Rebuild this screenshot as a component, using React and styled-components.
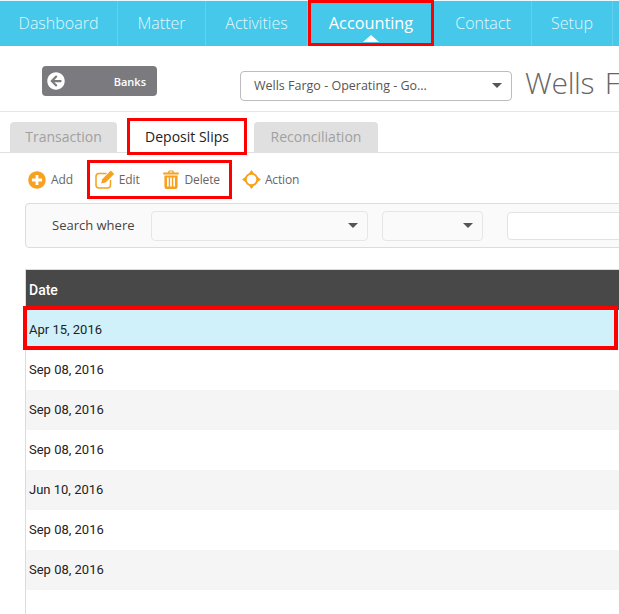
import React from "react";
import styled, { createGlobalStyle } from "styled-components";
import { FaArrowCircleLeft, FaPlusCircle } from "react-icons/fa";

const Global = createGlobalStyle`
  html, body { margin: 0; padding: 0; background: #fff; overflow: hidden; }
  * { box-sizing: border-box; }
`;

const sans = `"Open Sans", "Noto Sans", "Liberation Sans", sans-serif`;

const Page = styled.div`
  width: 619px;
  height: 614px;
  overflow: hidden;
  font-family: ${sans};
  background: #fff;
`;

const Nav = styled.nav`
  display: flex;
  height: 46px;
  background: #45c8ea;
  border-top: 1px solid #e8f8fc;
`;

const NavItem = styled.div`
  position: relative;
  flex: 0 0 ${(p) => p.$w}px;
  display: flex;
  align-items: center;
  justify-content: center;
  padding-bottom: 1px;
  color: ${(p) => (p.$active ? "#ffffff" : "#e4f7fc")};
  font-size: ${(p) => (p.$active ? 16.3 : 16)}px;
  font-weight: ${(p) => (p.$active ? 400 : 300)};
  border-right: 1px solid ${(p) => (p.$active ? "transparent" : "#62d1ee")};
`;

const Caret = styled.span`
  position: absolute;
  left: 50%;
  bottom: 4px;
  margin-left: -8px;
  border-left: 8px solid transparent;
  border-right: 8px solid transparent;
  border-bottom: 7px solid #fff;
`;

const Marker = styled.span`
  position: absolute;
  top: ${(p) => p.$t}px;
  bottom: ${(p) => p.$b}px;
  left: ${(p) => p.$l}px;
  right: ${(p) => p.$r}px;
  border: ${(p) => p.$s || 3}px solid #ff0000;
  pointer-events: none;
  z-index: 2;
`;

const Header = styled.header`
  display: flex;
  align-items: flex-start;
  height: 66px;
  padding: 20px 0 0 42px;
  border-bottom: 1px solid #e6e6e6;
  white-space: nowrap;
  overflow: hidden;
`;

const BackButton = styled.div`
  flex: none;
  display: flex;
  align-items: center;
  justify-content: space-between;
  width: 115px;
  height: 30px;
  margin-right: 83px;
  padding: 0 11px 0 5px;
  background: #7b7b7f;
  border-radius: 4px;
  color: #fff;
  font-size: 11px;
  font-weight: 600;
  svg { width: 18px; height: 18px; }
`;

const Picker = styled.div`
  flex: none;
  display: flex;
  align-items: center;
  justify-content: space-between;
  width: 272px;
  height: 30px;
  margin: 5px 13px 0 0;
  padding: 0 9px 1px 13px;
  border: 1px solid #bdbdbd;
  border-radius: 4px;
  color: #555;
  font-size: 12.5px;
`;

const Arrow = styled.span`
  width: 0;
  height: 0;
  border-left: 5px solid transparent;
  border-right: 5px solid transparent;
  border-top: 5px solid #555;
`;

const Title = styled.h1`
  margin: -3px 0 0;
  color: #666;
  font-size: 30px;
  line-height: 40px;
  letter-spacing: -0.3px;
  word-spacing: 3px;
  font-weight: 300;
`;

const Tabs = styled.div`
  display: flex;
  align-items: flex-end;
  height: 41px;
  padding-left: 10px;
  border-bottom: 1px solid #e0e0e0;
`;

const Tab = styled.div`
  position: relative;
  flex: 0 0 ${(p) => p.$w}px;
  margin-right: ${(p) => p.$m}px;
  height: 30px;
  display: flex;
  align-items: center;
  justify-content: center;
  padding-bottom: 2px;
  border-radius: 4px 4px 0 0;
  font-size: 14px;
  color: ${(p) => (p.$active ? "#222" : "#a0a0a0")};
  background: ${(p) => (p.$active ? "#fff" : "#e0e0e0")};
`;

const Toolbar = styled.div`
  display: flex;
  align-items: center;
  height: 50px;
  padding: 3px 0 0 28px;
`;

const Tool = styled.div`
  display: flex;
  align-items: center;
  gap: ${(p) => p.$gap}px;
  margin-right: ${(p) => p.$m}px;
  font-size: 12px;
  letter-spacing: -0.15px;
  color: #666;
  svg { flex: none; color: #f7a11e; }
`;

const ToolGroup = styled.div`
  position: relative;
  display: flex;
  align-items: center;
  margin-right: 22px;
`;

const SearchPanel = styled.div`
  display: flex;
  align-items: center;
  height: 45px;
  margin-left: 25px;
  width: 640px;
  padding-left: 26px;
  background: #fafafa;
  border: 1px solid #dcdcdc;
  border-radius: 4px 0 0 4px;
`;

const SearchLabel = styled.label`
  flex: 0 0 99px;
  padding-bottom: 1px;
  font-size: 13px;
  color: #444;
`;

const Dropdown = styled.div`
  flex: 0 0 ${(p) => p.$w}px;
  margin-right: ${(p) => p.$m}px;
  height: 30px;
  display: flex;
  align-items: center;
  justify-content: flex-end;
  padding-right: 9px;
  background: #fafafa;
  border: 1px solid #e6e6e6;
  border-radius: 4px;
`;

const SearchInput = styled.div`
  flex: 0 0 140px;
  height: 28px;
  background: #fff;
  border: 1px solid #e2e2e2;
  border-radius: 4px;
`;

const Table = styled.div`
  margin: 21px 0 0 25px;
  height: 400px;
  border-left: 1px solid #dcdcdc;
  border-top: 1px solid #dcdcdc;
  font-family: Roboto, "Liberation Sans", sans-serif;
`;

const HeadRow = styled.div`
  display: flex;
  align-items: center;
  height: 40px;
  padding-left: 3px;
  background: #484848;
  color: #fff;
  font-size: 14px;
  font-weight: 500;
`;

const Row = styled.div`
  position: relative;
  display: flex;
  align-items: center;
  height: 40px;
  padding: 0 0 2px 3px;
  font-size: 13px;
  color: #222;
  background: ${(p) => (p.$selected ? "#d0f1f9" : p.$odd ? "#f5f5f5" : "#fff")};
`;

const AddIcon = () => <FaPlusCircle size={18} />;

const EditIcon = () => (
  <svg width="20" height="19" viewBox="0 0 20 19" fill="#f7a11e">
    <path
      d="M11.500 3.500H4C2.300 3.500 1 4.800 1 6.500v8.500c0 1.700 1.300 3 3 3h8.500c1.700 0 3-1.300 3-3v-5"
      fill="none"
      stroke="#f7a11e"
      strokeWidth="1.500"
    />
    <path d="M15.800.6l3.400 3.400-8.600 8.600-4.400 1 1-4.400z" />
  </svg>
);

const TrashIcon = () => (
  <svg width="16" height="19" viewBox="0 0 16 19" fill="#f7a11e">
    <path d="M4.800 2.400 5.800.4h4.400l1 2H15.800v2.200H.2V2.400zM6.800 1.500l-.4.900h3.200l-.4-.9z" />
    <path
      fillRule="evenodd"
      d="M1.400 5.500h13.200v11.300c0 1.200-.8 2.200-1.800 2.200H3.200c-1 0-1.800-1-1.800-2.200zM4 7.500v9h1.700v-9zm3.150 0v9h1.700v-9zm3.150 0v9H12v-9z"
    />
  </svg>
);

const ActionIcon = () => (
  <svg width="19" height="19" viewBox="0 0 19 19" fill="#f7a11e">
    <circle cx="9.500" cy="9.500" r="5.800" fill="none" stroke="#f7a11e" strokeWidth="2" />
    <path d="M9.500 0l2.800 3.800H6.700zM9.500 19l-2.800-3.800h5.600zM0 9.500l3.800-2.800v5.600zM19 9.500l-3.800 2.800V6.700z" />
  </svg>
);

const dates = [
  "Sep 08, 2016",
  "Sep 08, 2016",
  "Sep 08, 2016",
  "Jun 10, 2016",
  "Sep 08, 2016",
  "Sep 08, 2016",
];

export default function App() {
  return (
    <Page>
      <Global />
      <Nav>
        <NavItem $w={118}>Dashboard</NavItem>
        <NavItem $w={88}>Matter</NavItem>
        <NavItem $w={102}>Activities</NavItem>
        <NavItem $w={127} $active>
          Accounting
          <Caret />
          <Marker $t={-1} $b={0} $l={0} $r={0} $s={3} />
        </NavItem>
        <NavItem $w={97}>Contact</NavItem>
        <NavItem $w={81}>Setup</NavItem>
      </Nav>
      <Header>
        <BackButton>
          <FaArrowCircleLeft />
          Banks
        </BackButton>
        <Picker>
          Wells Fargo - Operating - Go...
          <Arrow />
        </Picker>
        <Title>Wells Fargo</Title>
      </Header>
      <Tabs>
        <Tab $w={107} $m={11}>Transaction</Tab>
        <Tab $w={118} $m={8} $active>
          Deposit Slips
          <Marker $t={-4} $b={-3} $l={-1} $r={-1} $s={3} />
        </Tab>
        <Tab $w={124} $m={0}>Reconciliation</Tab>
      </Tabs>
      <Toolbar>
        <Tool $gap={5} $m={22}>
          <AddIcon />
          Add
        </Tool>
        <ToolGroup>
          <Marker $t={-10} $b={-10} $l={-8} $r={-12} $s={3} />
          <Tool $gap={4} $m={23}>
            <EditIcon />
            Edit
          </Tool>
          <Tool $gap={6} $m={0}>
            <TrashIcon />
            Delete
          </Tool>
        </ToolGroup>
        <Tool $gap={4} $m={0}>
          <ActionIcon />
          Action
        </Tool>
      </Toolbar>
      <SearchPanel>
        <SearchLabel>Search where</SearchLabel>
        <Dropdown $w={217} $m={14}><Arrow /></Dropdown>
        <Dropdown $w={101} $m={24}><Arrow /></Dropdown>
        <SearchInput />
      </SearchPanel>
      <Table>
        <HeadRow>Date</HeadRow>
        <Row $selected>
          Apr 15, 2016
          <Marker $t={-4} $b={0} $l={-3} $r={1} $s={4} />
        </Row>
        {dates.map((d, i) => (
          <Row key={i} $odd={i % 2 === 1}>{d}</Row>
        ))}
      </Table>
    </Page>
  );
}
